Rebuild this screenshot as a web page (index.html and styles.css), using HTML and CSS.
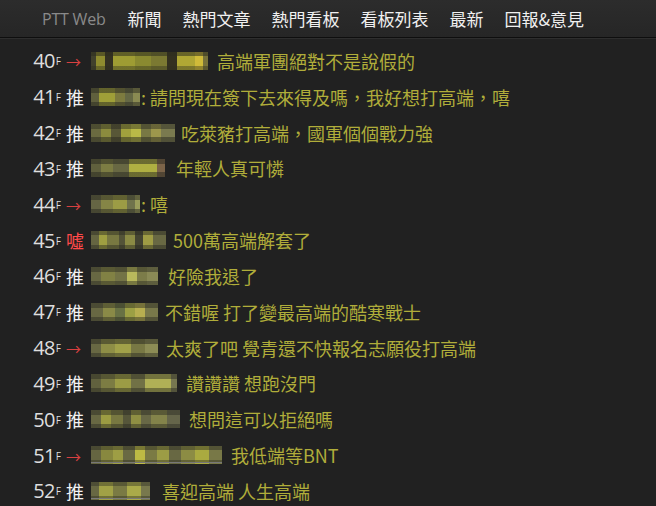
FILE: index.html
```html
<!DOCTYPE html>
<html lang="zh-Hant">
<head>
<meta charset="utf-8">
<title>PTT Web</title>
<link rel="stylesheet" href="styles.css">
</head>
<body>
<header class="topbar">
  <span class="brand">PTT Web</span>
  <nav class="nav">
    <a>新聞</a><a>熱門文章</a><a>熱門看板</a><a>看板列表</a><a>最新</a><a>回報&amp;意見</a>
  </nav>
</header>
<main class="pushes">
  <div class="row"><span class="floor">40<small>F</small></span><span class="tag arrow">→</span><span class="mosaic m40"></span><span class="text gap9">高端軍團絕對不是說假的</span></div>
  <div class="row"><span class="floor">41<small>F</small></span><span class="tag">推</span><span class="mosaic m41"></span><span class="text">: 請問現在簽下去來得及嗎，我好想打高端，嘻</span></div>
  <div class="row"><span class="floor">42<small>F</small></span><span class="tag">推</span><span class="mosaic m42"></span><span class="text gap6">吃萊豬打高端，國軍個個戰力強</span></div>
  <div class="row"><span class="floor">43<small>F</small></span><span class="tag">推</span><span class="mosaic m43"></span><span class="text gap11">年輕人真可憐</span></div>
  <div class="row"><span class="floor">44<small>F</small></span><span class="tag arrow">→</span><span class="mosaic m44"></span><span class="text">: 嘻</span></div>
  <div class="row"><span class="floor">45<small>F</small></span><span class="tag boo">噓</span><span class="mosaic m45"></span><span class="text gap7">500萬高端解套了</span></div>
  <div class="row"><span class="floor">46<small>F</small></span><span class="tag">推</span><span class="mosaic m46"></span><span class="text gap10">好險我退了</span></div>
  <div class="row"><span class="floor">47<small>F</small></span><span class="tag">推</span><span class="mosaic m47"></span><span class="text gap7">不錯喔 打了變最高端的酷寒戰士</span></div>
  <div class="row"><span class="floor">48<small>F</small></span><span class="tag arrow">→</span><span class="mosaic m48"></span><span class="text gap8">太爽了吧 覺青還不快報名志願役打高端</span></div>
  <div class="row"><span class="floor">49<small>F</small></span><span class="tag">推</span><span class="mosaic m49"></span><span class="text gap9">讚讚讚 想跑沒門</span></div>
  <div class="row"><span class="floor">50<small>F</small></span><span class="tag">推</span><span class="mosaic m50"></span><span class="text gap9">想問這可以拒絕嗎</span></div>
  <div class="row"><span class="floor">51<small>F</small></span><span class="tag arrow">→</span><span class="mosaic m51"></span><span class="text gap9">我低端等BNT</span></div>
  <div class="row"><span class="floor">52<small>F</small></span><span class="tag">推</span><span class="mosaic m52"></span><span class="text gap12">喜迎高端 人生高端</span></div>
</main>
</body>
</html>
```

FILE: styles.css
```css
html, body {
  margin: 0;
  padding: 0;
  background: #212121;
  width: 656px;
  height: 506px;
  overflow: hidden;
  font-family: "Open Sans", "Noto Sans CJK TC", sans-serif;
}

.topbar {
  height: 37px;
  display: flex;
  align-items: center;
  padding-left: 42px;
  background: linear-gradient(#2c2c2c, #262626);
  border-bottom: 1px solid #0e0e0e;
  box-shadow: 0 1px 0 #2e2e2e;
}

.brand {
  font-size: 16px;
  color: #8a8a8a;
  letter-spacing: -0.2px;
}

.nav {
  display: flex;
  gap: 21px;
  margin-left: 22px;
}

.nav a {
  font-size: 17px;
  color: #f0f0f0;
  font-family: "Noto Sans CJK TC", sans-serif;
}

.pushes {
  padding-top: 5px;
}

.row {
  height: 35.83px;
  display: flex;
  align-items: center;
  font-size: 18px;
  white-space: nowrap;
}

.floor {
  width: 61px;
  text-align: right;
  color: #dedede;
  font-size: 20px;
  letter-spacing: -0.6px;
}

.floor small {
  font-size: 10px;
  letter-spacing: 0;
  vertical-align: 3px;
  margin-left: 1px;
}

.tag {
  width: 18px;
  margin-left: 5px;
  margin-right: 7px;
  color: #f2f2f2;
  font-family: "Noto Sans CJK TC", sans-serif;
  font-size: 18px;
}

.tag.arrow {
  color: #d84040;
  font-size: 15px;
  padding-top: 2px;
}

.tag.boo {
  color: #ff4a4a;
}

.text {
  color: #b0ad3a;
  font-family: "Noto Sans CJK TC", sans-serif;
  font-size: 18px;
  margin-left: 1px;
}

.gap6 { margin-left: 6px; }
.gap7 { margin-left: 7px; }
.gap8 { margin-left: 8px; }
.gap9 { margin-left: 9px; }
.gap10 { margin-left: 10px; }
.gap11 { margin-left: 11px; }
.gap12 { margin-left: 12px; }

.mosaic {
  display: inline-block;
  height: 18px;
  flex: none;
  background-color: #5a5a3c;
  filter: saturate(1.35) brightness(1.12) blur(0.5px);
}

.m40 {
  width: 117px;
  background:
    linear-gradient(rgba(40,40,30,.55) 0 4px, transparent 4px 14px, rgba(40,40,30,.4) 14px),
    linear-gradient(90deg, #3a3a2c 0 5px, #7e7c3e 5px 14px, #2e2c22 14px 22px, #8b8a44 22px 44px, #7a7a3e 44px 60px, #6c6b3c 60px 76px, #2d2b20 76px 86px, #9a9448 86px 104px, #b4a650 104px 112px, #6a6640 112px);
}

.m41 {
  width: 49px;
  background:
    linear-gradient(rgba(35,35,30,.5) 0 5px, transparent 5px 14px, rgba(35,35,30,.5) 14px),
    linear-gradient(90deg, #55553e 0 8px, #8c8c48 8px 24px, #6e6d45 24px 34px, #5a5c45 34px 42px, #7a7a55 42px);
}

.m42 {
  width: 84px;
  background:
    linear-gradient(rgba(35,35,30,.45) 0 5px, transparent 5px 13px, rgba(35,35,30,.5) 13px),
    linear-gradient(90deg, #5e5e42 0 10px, #7c7c48 10px 20px, #4e4d38 20px 30px, #8e8e4c 30px 40px, #a4a458 40px 50px, #6a6a48 50px 60px, #8a8654 60px 70px, #6c6c50 70px);
}

.m43 {
  width: 74px;
  background:
    linear-gradient(rgba(35,35,30,.5) 0 5px, transparent 5px 13px, rgba(35,35,30,.5) 13px),
    linear-gradient(90deg, #55553e 0 10px, #6e6e48 10px 22px, #5c5c44 22px 38px, #9a9a52 38px 66px, #6a5a48 66px);
}

.m44 {
  width: 49px;
  background:
    linear-gradient(rgba(35,35,30,.5) 0 5px, transparent 5px 14px, rgba(35,35,30,.5) 14px),
    linear-gradient(90deg, #5a5a44 0 10px, #76764c 10px 22px, #8a8a50 22px 36px, #64664c 36px 44px, #8a8c60 44px);
}

.m45 {
  width: 75px;
  background:
    linear-gradient(rgba(35,35,30,.45) 0 4px, transparent 4px 14px, rgba(35,35,30,.45) 14px),
    linear-gradient(90deg, #5a5a42 0 8px, #8c8c4e 8px 16px, #6a6a46 16px 28px, #4a4a38 28px 34px, #7a7a4c 34px 44px, #3c3c30 44px 52px, #8c8a50 52px 62px, #5c5c44 62px);
}

.m46 {
  width: 67px;
  background:
    linear-gradient(rgba(35,35,30,.45) 0 5px, transparent 5px 14px, rgba(35,35,30,.45) 14px),
    linear-gradient(90deg, #5c5c44 0 10px, #72724a 10px 24px, #666648 24px 36px, #a4a466 36px 46px, #6e6e4c 46px 56px, #7a7a58 56px);
}

.m47 {
  width: 67px;
  background:
    linear-gradient(rgba(35,35,30,.45) 0 5px, transparent 5px 14px, rgba(35,35,30,.45) 14px),
    linear-gradient(90deg, #5c5c44 0 12px, #7a7a4e 12px 24px, #5e6446 24px 34px, #8a8c50 34px 44px, #a09a5c 44px 54px, #6a6a4c 54px);
}

.m48 {
  width: 67px;
  background:
    linear-gradient(rgba(35,35,30,.5) 0 5px, transparent 5px 14px, rgba(35,35,30,.45) 14px),
    linear-gradient(90deg, #5c5c44 0 10px, #7e7e4e 10px 24px, #8e8e54 24px 40px, #6a6a48 40px 54px, #7c7c58 54px);
}

.m49 {
  width: 86px;
  background:
    linear-gradient(rgba(35,35,30,.45) 0 5px, transparent 5px 14px, rgba(35,35,30,.45) 14px),
    linear-gradient(90deg, #56563f 0 10px, #6e6e48 10px 24px, #8a8a50 24px 40px, #646448 40px 54px, #9c9c60 54px 80px, #6a6a50 80px);
}

.m50 {
  width: 89px;
  background:
    linear-gradient(rgba(35,35,30,.45) 0 5px, transparent 5px 14px, rgba(35,35,30,.45) 14px),
    linear-gradient(90deg, #5c5c44 0 10px, #8a8a4e 10px 20px, #6a6a46 20px 32px, #4c4c3a 32px 40px, #7e7e4c 40px 50px, #5c5c46 50px 60px, #74744e 60px 76px, #5a5a48 76px);
}

.m51 {
  width: 131px;
  background:
    linear-gradient(rgba(35,35,30,.45) 0 4px, transparent 4px 14px, rgba(35,35,30,.4) 14px 16px, #6a6a6a 16px 17px, transparent 17px),
    linear-gradient(90deg, #5a5a42 0 10px, #787848 10px 22px, #8c8c50 22px 32px, #5e5e44 32px 44px, #a6a456 44px 54px, #6c6c48 54px 66px, #8a8a50 66px 78px, #5c5c44 78px 90px, #7c7c4c 90px 104px, #969650 104px 118px, #6a6a4a 118px);
}

.m52 {
  width: 59px;
  background:
    linear-gradient(rgba(35,35,30,.4) 0 4px, transparent 4px 14px, rgba(35,35,30,.4) 14px 16px, #6e6e6e 16px 17px, transparent 17px),
    linear-gradient(90deg, #5c5c44 0 8px, #8e8e52 8px 22px, #6c6c48 22px 36px, #969656 36px 50px, #6a6a4e 50px);
}
```
